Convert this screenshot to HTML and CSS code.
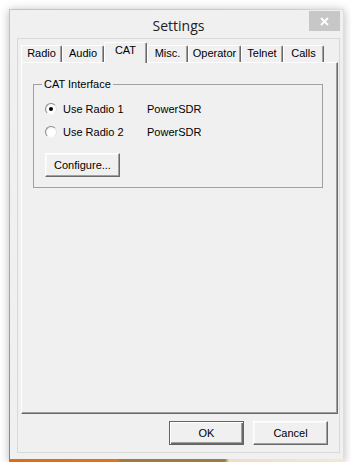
FILE: index.html
```html
<!DOCTYPE html>
<html lang="en">
<head>
    <meta charset="UTF-8">
    <title>Settings</title>
    <link rel="stylesheet" href="styles.css">
</head>
<body>
    <div class="window">
        <div class="frame">
            <div class="titlebar">
                <div class="title">Settings</div>
                <div class="close">
                    <svg width="9" height="9" viewBox="0 0 9 9">
                        <path d="M1 1 L8 8 M8 1 L1 8" stroke="#fff" stroke-width="1.8" fill="none"/>
                    </svg>
                </div>
            </div>

            <div class="client">
                <div class="tabs">
                    <div class="tab w-radio">Radio</div>
                    <div class="tab w-audio">Audio</div>
                    <div class="tab w-cat selected">CAT</div>
                    <div class="tab w-misc">Misc.</div>
                    <div class="tab w-operator">Operator</div>
                    <div class="tab w-telnet">Telnet</div>
                    <div class="tab w-calls">Calls</div>
                </div>

                <div class="panel">
                    <fieldset class="group">
                        <legend>CAT Interface</legend>
                        <div class="group-body">
                            <div class="option">
                                <div class="choice"><span class="radio checked"></span>Use Radio 1</div>
                                <div>PowerSDR</div>
                            </div>
                            <div class="option">
                                <div class="choice"><span class="radio"></span>Use Radio 2</div>
                                <div>PowerSDR</div>
                            </div>
                            <button class="btn configure">Configure...</button>
                        </div>
                    </fieldset>
                </div>

                <div class="buttons">
                    <button class="btn default">OK</button>
                    <button class="btn">Cancel</button>
                </div>
            </div>
        </div>
    </div>
</body>
</html>
```

FILE: styles.css
```css
* {
    box-sizing: border-box;
}

body {
    margin: 0;
    background: #fff;
    color: #000;
    font-family: "Liberation Sans", Arial, sans-serif;
    font-size: 11px;
}

.window {
    margin: 9px 0 0 9px;
    width: 335px;
    height: 453px;
    padding: 1px 1px 3px 1px;
    background:
        linear-gradient(to right, #e06c12 0, #e0741a 108px, #a27a40 112px, #9c7c4a 216px, #efdcc2 220px, #f4e6d6 100%) left bottom / 100% 3px no-repeat,
        linear-gradient(#f3c63e, #e3a030 60%, #e06c12) left top / 1px 100% no-repeat,
        linear-gradient(to right, #f3c63e, #f1cd5c 85%, #e4e0d4) left top / 100% 1px no-repeat,
        #dedede;
    box-shadow: 0 1px 9px rgba(0, 0, 0, 0.28);
}

.frame {
    height: 100%;
    display: flex;
    flex-direction: column;
    padding: 0 3px 6px 7px;
    background: #f0f0f0;
}

.titlebar {
    height: 28px;
    flex: none;
    display: grid;
    grid-template-columns: 1fr auto 1fr;
}

.title {
    grid-column: 2;
    align-self: center;
    padding-top: 2px;
    font-family: "Open Sans", "Noto Sans", sans-serif;
    font-size: 14px;
    color: #222;
}

.close {
    grid-column: 3;
    justify-self: end;
    margin-top: 1px;
    width: 31px;
    height: 20px;
    background: #c7c7c7;
    display: flex;
    align-items: center;
    justify-content: center;
}

.client {
    flex: 1;
    display: flex;
    flex-direction: column;
    padding: 3px 1px 0 3px;
    border: 1px solid #d9d9d9;
}

.tabs {
    height: 20px;
    flex: none;
    display: flex;
    align-items: flex-end;
}

.tab {
    height: 17px;
    line-height: 15px;
    text-align: center;
    background: #f0f0f0;
    border-top: 1px solid #fff;
    border-left: 1px solid #fff;
    border-right: 1px solid #696969;
    box-shadow: inset -1px 0 #a0a0a0;
    border-top-left-radius: 2px;
    border-top-right-radius: 2px;
}

.tab.selected {
    height: 21px;
    margin-bottom: -1px;
    position: relative;
    z-index: 1;
}

.w-radio { width: 41px; }
.w-audio { width: 42px; }
.w-cat { width: 43px; }
.w-misc { width: 41px; }
.w-operator { width: 53px; }
.w-telnet { width: 42px; }
.w-calls { width: 41px; }

.panel {
    flex: 1;
    padding: 15px 0 0 11px;
    border-top: 1px solid #fff;
    border-left: 1px solid #fff;
    border-right: 1px solid #696969;
    border-bottom: 1px solid #696969;
    box-shadow: inset -1px -1px #a0a0a0;
}

.group {
    width: 290px;
    margin: 0;
    padding: 0;
    min-width: 0;
    border: 1px solid #a0a0a0;
}

.group legend {
    margin-left: 8px;
    padding: 0 2px;
    line-height: 13px;
}

.group-body {
    display: flex;
    flex-direction: column;
    align-items: flex-start;
    padding: 10px 0 10px 11px;
}

.option {
    height: 16px;
    display: grid;
    grid-template-columns: 102px auto;
    align-items: center;
}

.option + .option {
    margin-top: 7px;
}

.choice {
    display: flex;
    align-items: center;
    gap: 6px;
}

.radio {
    width: 12px;
    height: 12px;
    border-radius: 50%;
    border: 1px solid;
    border-color: #8a8a8a #e4e4e4 #f4f4f4 #8a8a8a;
    background: radial-gradient(circle at 60% 60%, #fff 45%, #e6e6e6 100%);
    display: flex;
    align-items: center;
    justify-content: center;
}

.radio.checked::after {
    content: "";
    width: 4px;
    height: 4px;
    border-radius: 50%;
    background: #000;
}

.btn {
    width: 75px;
    height: 24px;
    padding: 0;
    font-family: "Liberation Sans", Arial, sans-serif;
    font-size: 11px;
    color: #000;
    background: #f0f0f0;
    border: 1px solid;
    border-color: #fff #696969 #696969 #fff;
    box-shadow: inset -1px -1px #a0a0a0, inset 1px 1px #f8f8f8;
}

.btn.configure {
    margin-top: 13px;
}

.btn.default {
    border: 1px solid #646464;
    box-shadow: inset 1px 1px #fff, inset -1px -1px #696969, inset -2px -2px #a0a0a0;
}

.buttons {
    flex: none;
    display: flex;
    justify-content: flex-end;
    gap: 9px;
    padding: 7px 10px 7px 0;
}
```
